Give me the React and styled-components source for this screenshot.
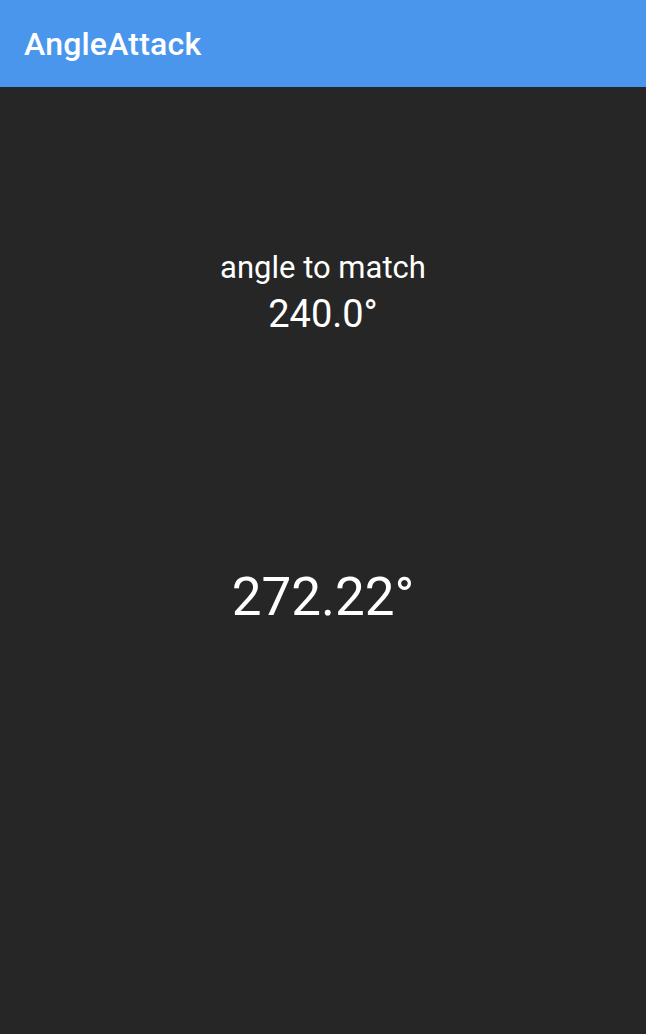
import React from "react";
import styled, { createGlobalStyle } from "styled-components";

const GlobalStyle = createGlobalStyle`
  html, body {
    margin: 0;
    padding: 0;
    background: #262626;
    font-family: Roboto, "Noto Sans", sans-serif;
  }
`;

const Screen = styled.div`
  width: 646px;
  height: 1034px;
  display: flex;
  flex-direction: column;
  background: #262626;
  color: #ffffff;
`;

const AppBar = styled.header`
  height: 87px;
  flex-shrink: 0;
  background: #4a96ec;
  display: flex;
  align-items: center;
  padding-left: 24px;
`;

const Title = styled.h1`
  margin: 0;
  font-size: 32px;
  font-weight: 500;
  letter-spacing: 0.2px;
  color: #ffffff;
`;

const Body = styled.main`
  display: flex;
  flex-direction: column;
  align-items: center;
  padding-top: 163px;
`;

const Label = styled.div`
  font-size: ${(p) => p.size}px;
  line-height: ${(p) => p.lh}px;
  margin-top: ${(p) => p.mt || 0}px;
`;

const App = () => {
  return (
    <>
      <GlobalStyle />
      <Screen>
        <AppBar>
          <Title>AngleAttack</Title>
        </AppBar>
        <Body>
          <Label size={31} lh={36}>angle to match</Label>
          <Label size={38} lh={44} mt={6}>240.0°</Label>
          <Label size={53} lh={64} mt={229}>272.22°</Label>
        </Body>
      </Screen>
    </>
  );
};

export default App;
